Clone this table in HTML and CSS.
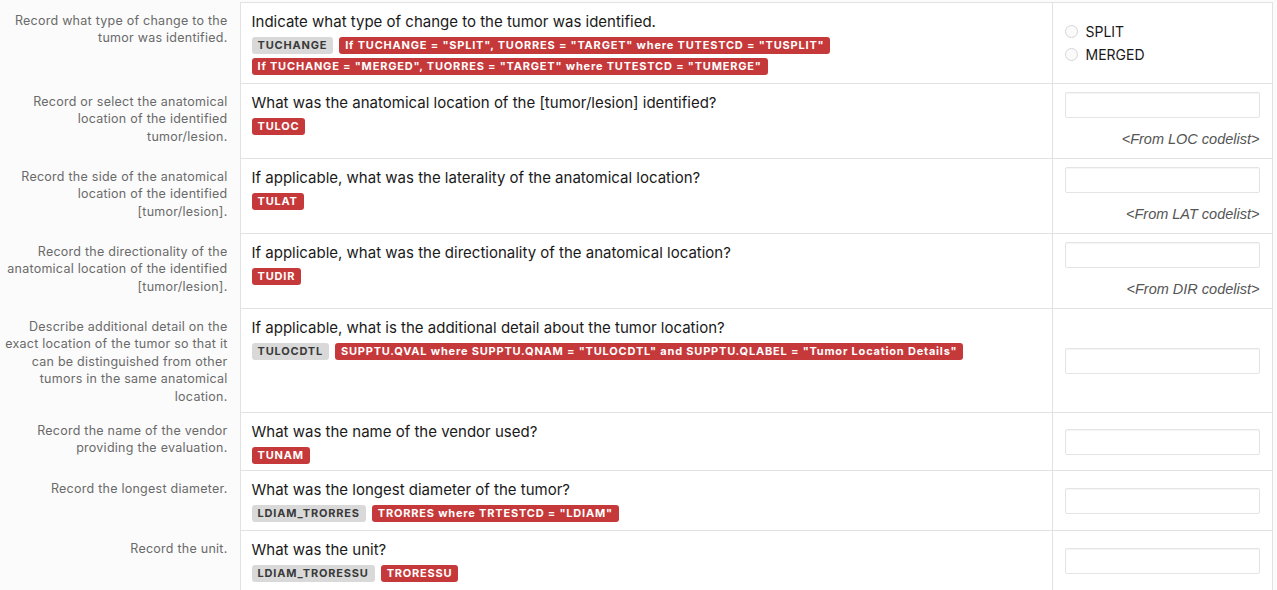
FILE: index.html
```html
<!DOCTYPE html>
<html lang="en">
<head>
    <meta charset="UTF-8">
    <meta name="viewport" content="width=device-width, initial-scale=1.0">
    <title>Tumor Identification CRF</title>
    <link rel="stylesheet" href="styles.css">
</head>
<body>

    <table class="crf">
        <colgroup>
            <col class="col-label">
            <col class="col-question">
            <col class="col-answer">
        </colgroup>
        <tbody>
            <tr class="row-1">
                <td class="label">Record what type of change to the tumor was identified.</td>
                <td class="question">
                    <div class="q-text">Indicate what type of change to the tumor was identified.</div>
                    <div class="tags">
                        <span class="tag grey">TUCHANGE</span>
                        <span class="tag red">If TUCHANGE = "SPLIT", TUORRES = "TARGET" where TUTESTCD = "TUSPLIT"</span>
                        <span class="tag red">If TUCHANGE = "MERGED", TUORRES = "TARGET" where TUTESTCD = "TUMERGE"</span>
                    </div>
                </td>
                <td class="answer top">
                    <label class="radio"><span class="dot"></span>SPLIT</label>
                    <label class="radio"><span class="dot"></span>MERGED</label>
                </td>
            </tr>
            <tr class="row-2">
                <td class="label">Record or select the anatomical location of the identified tumor/lesion.</td>
                <td class="question">
                    <div class="q-text">What was the anatomical location of the [tumor/lesion] identified?</div>
                    <div class="tags">
                        <span class="tag red">TULOC</span>
                    </div>
                </td>
                <td class="answer top">
                    <div class="field"></div>
                    <div class="codelist">&lt;From LOC codelist&gt;</div>
                </td>
            </tr>
            <tr class="row-3">
                <td class="label">Record the side of the anatomical location of the identified [tumor/lesion].</td>
                <td class="question">
                    <div class="q-text">If applicable, what was the laterality of the anatomical location?</div>
                    <div class="tags">
                        <span class="tag red">TULAT</span>
                    </div>
                </td>
                <td class="answer top">
                    <div class="field"></div>
                    <div class="codelist">&lt;From LAT codelist&gt;</div>
                </td>
            </tr>
            <tr class="row-4">
                <td class="label">Record the directionality of the anatomical location of the identified [tumor/lesion].</td>
                <td class="question">
                    <div class="q-text">If applicable, what was the directionality of the anatomical location?</div>
                    <div class="tags">
                        <span class="tag red">TUDIR</span>
                    </div>
                </td>
                <td class="answer top">
                    <div class="field"></div>
                    <div class="codelist">&lt;From DIR codelist&gt;</div>
                </td>
            </tr>
            <tr class="row-5">
                <td class="label">Describe additional detail on the exact location of the tumor so that it can be distinguished from other tumors in the same anatomical location.</td>
                <td class="question">
                    <div class="q-text">If applicable, what is the additional detail about the tumor location?</div>
                    <div class="tags">
                        <span class="tag grey">TULOCDTL</span>
                        <span class="tag red">SUPPTU.QVAL where SUPPTU.QNAM = "TULOCDTL" and SUPPTU.QLABEL = "Tumor Location Details"</span>
                    </div>
                </td>
                <td class="answer">
                    <div class="field"></div>
                </td>
            </tr>
            <tr class="row-6">
                <td class="label">Record the name of the vendor providing the evaluation.</td>
                <td class="question">
                    <div class="q-text">What was the name of the vendor used?</div>
                    <div class="tags">
                        <span class="tag red">TUNAM</span>
                    </div>
                </td>
                <td class="answer">
                    <div class="field"></div>
                </td>
            </tr>
            <tr class="row-7">
                <td class="label">Record the longest diameter.</td>
                <td class="question">
                    <div class="q-text">What was the longest diameter of the tumor?</div>
                    <div class="tags">
                        <span class="tag grey">LDIAM_TRORRES</span>
                        <span class="tag red">TRORRES where TRTESTCD = "LDIAM"</span>
                    </div>
                </td>
                <td class="answer">
                    <div class="field"></div>
                </td>
            </tr>
            <tr class="row-8">
                <td class="label">Record the unit.</td>
                <td class="question">
                    <div class="q-text">What was the unit?</div>
                    <div class="tags">
                        <span class="tag grey">LDIAM_TRORESSU</span>
                        <span class="tag red">TRORESSU</span>
                    </div>
                </td>
                <td class="answer">
                    <div class="field"></div>
                </td>
            </tr>
        </tbody>
    </table>

</body>
</html>
```

FILE: styles.css
```css
body {
    margin: 0;
    font-family: Inter, "Liberation Sans", Arial, sans-serif;
    color: #222;
    background-color: #fbfbfb;
}

.crf {
    border-collapse: collapse;
    table-layout: fixed;
    width: 1272px;
    margin-top: 2px;
}
.col-label {
    width: 240px;
}
.col-question {
    width: 812px;
}
.col-answer {
    width: 220px;
}

td {
    vertical-align: top;
    padding: 0;
}

.label {
    padding: 9px 12px 0 2px;
    text-align: right;
    font-size: 12.5px;
    line-height: 17.6px;
    letter-spacing: 0.25px;
    color: #6a6a6a;
}

.question,
.answer {
    background: #fff;
    border: 1px solid #e2e2e2;
}

.question {
    padding: 9px 10px 6px 11px;
}
.q-text {
    font-size: 15px;
    line-height: 20px;
    color: #1a1a1a;
}
.tags {
    margin-top: 5px;
    display: flex;
    flex-wrap: wrap;
    gap: 4px 6px;
}
.tag {
    display: inline-block;
    height: 17px;
    line-height: 17px;
    padding: 0 6px;
    border-radius: 3px;
    font-size: 11px;
    font-weight: bold;
    letter-spacing: 0.8px;
}
.tag.grey {
    background: #d9d9d9;
    color: #3a3a3a;
}
.tag.red {
    background: #c6393a;
    color: #fff;
}

/* answer column */
.answer {
    padding: 0 12px;
    vertical-align: middle;
}
.answer.top {
    vertical-align: top;
    padding-top: 8px;
}
.row-1 .answer {
    padding-top: 17px;
}

.radio {
    display: flex;
    align-items: center;
    font-size: 14px;
    line-height: 23px;
    color: #1a1a1a;
}
.dot {
    width: 11px;
    height: 11px;
    border: 1px solid #d6d6d6;
    border-radius: 50%;
    margin: 0 8px 0 0;
    background: #fafafa;
}

.field {
    height: 24px;
    border: 1px solid #e4e4e4;
    border-radius: 2px;
    background: #fff;
    box-shadow: inset 0 1px 1px rgba(0, 0, 0, 0.04);
}
.codelist {
    margin-top: 13px;
    text-align: right;
    font-family: "Liberation Sans", Arial, sans-serif;
    font-size: 14.5px;
    font-style: italic;
    color: #555;
}

.row-1 { height: 81px; }
.row-2 { height: 75px; }
.row-3 { height: 75px; }
.row-4 { height: 75px; }
.row-5 { height: 104px; }
.row-6 { height: 58px; }
.row-7 { height: 60px; }
.row-8 { height: 60px; }
```
